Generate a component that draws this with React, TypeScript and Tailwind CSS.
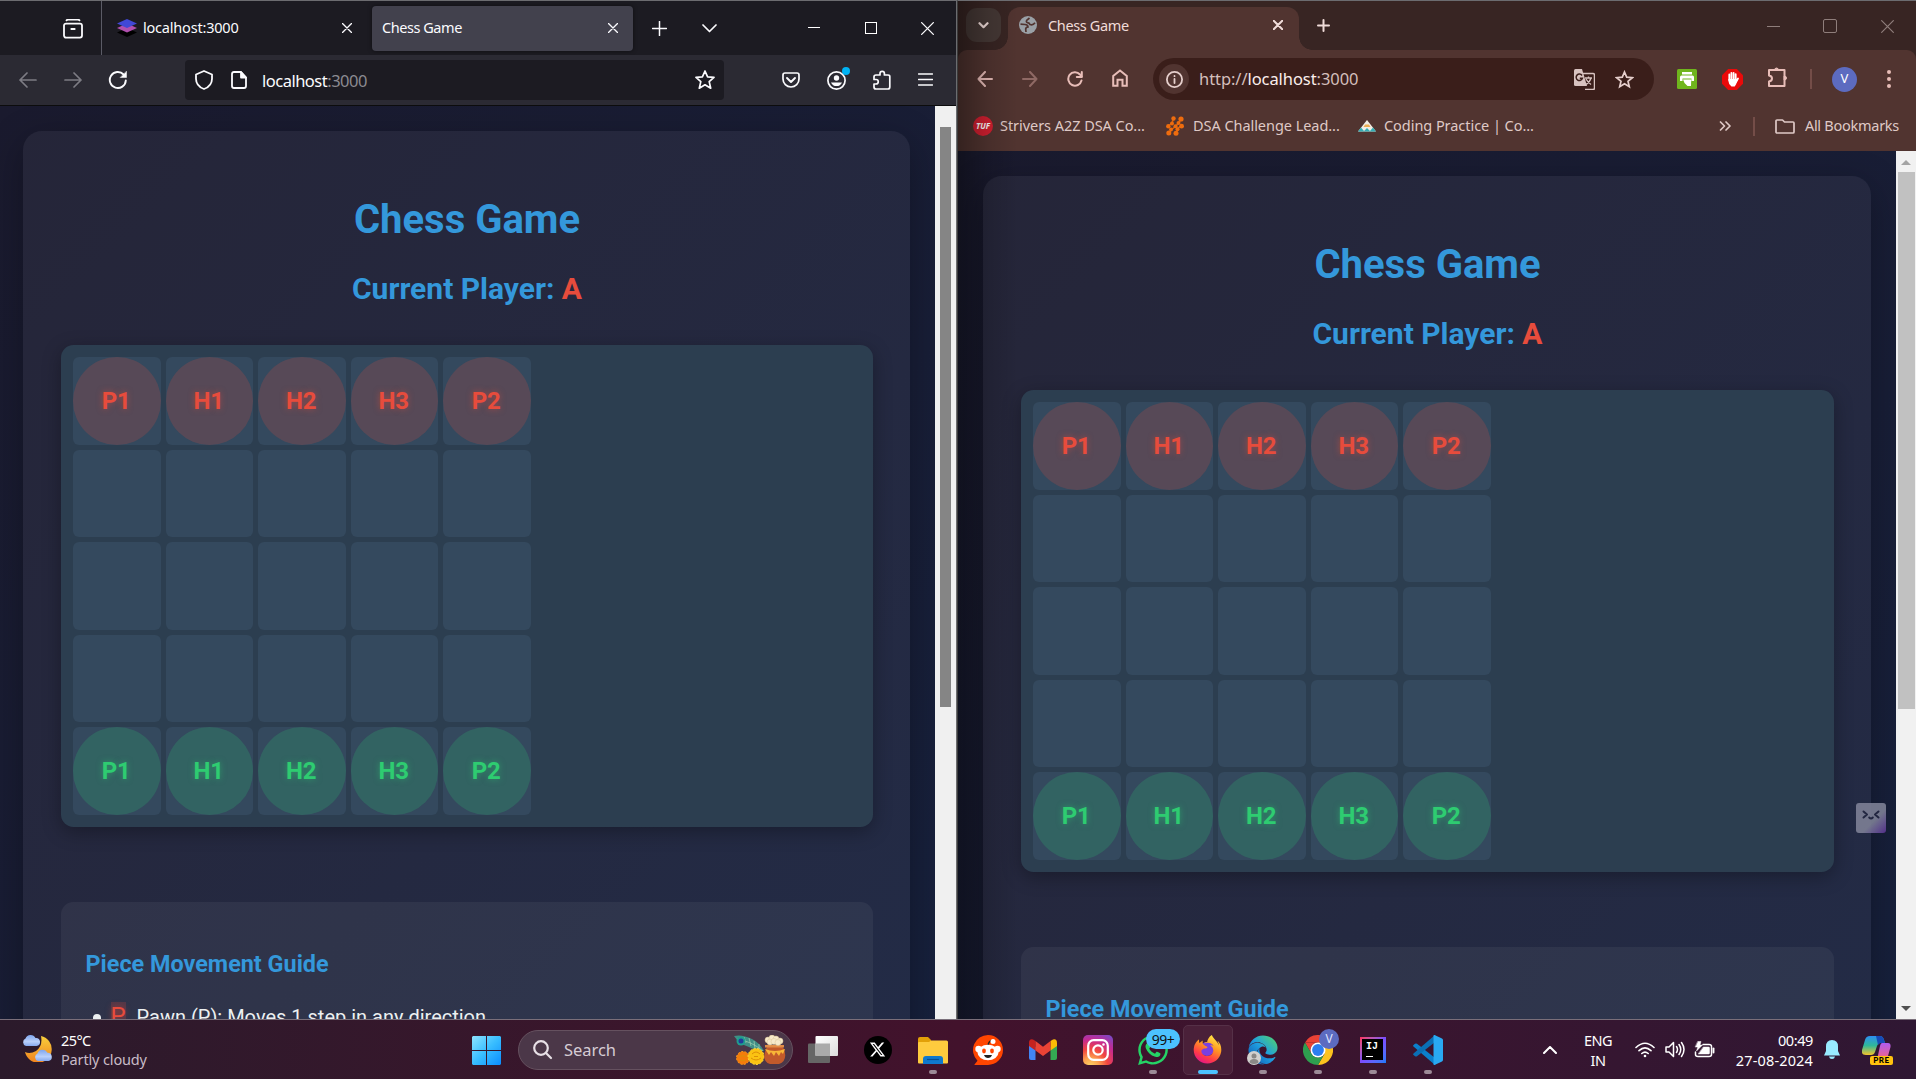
import React from "react";
import { FaWhatsapp, FaFirefoxBrowser, FaEdge } from "react-icons/fa";
import { FaXTwitter } from "react-icons/fa6";

type SvgProps = {
  w?: number;
  h?: number;
  box?: string;
  className?: string;
  sw?: number;
  children: React.ReactNode;
};

/** Stroked icon canvas; size defaults to 20 by 20. */
function Svg({ w = 20, h = 20, box, className = "", sw = 1.6, children }: SvgProps) {
  return (
    <svg
      width={w}
      height={h}
      viewBox={box ?? `0 0 ${w} ${h}`}
      className={`block shrink-0 ${className}`}
      fill="none"
      stroke="currentColor"
      strokeWidth={sw}
      strokeLinecap="round"
      strokeLinejoin="round"
    >
      {children}
    </svg>
  );
}

/* ------------------------------ Chess page ------------------------------ */

const names = ["P1", "H1", "H2", "H3", "P2"];

function Board() {
  return (
    <div className="mt-[39px] grid grid-cols-[repeat(5,87.5px)] grid-rows-[repeat(5,87.5px)] gap-[5px] rounded-[12.5px] bg-[#2c3e50] p-[12px] shadow-[0_5px_19px_rgba(0,0,0,0.3)]">
      {[0, 1, 2, 3, 4].map((row) =>
        names.map((name) => (
          <div key={row + name} className="overflow-hidden rounded-[6px] bg-[#34495e]">
            {row === 0 && (
              <div className="flex size-full items-center justify-center rounded-full bg-[#e74c3c]/20 text-[24px] font-bold text-[#e74c3c] [text-shadow:0_0_6px_rgba(231,76,60,0.5)]">
                <span className="-ml-px">{name}</span>
              </div>
            )}
            {row === 4 && (
              <div className="flex size-full items-center justify-center rounded-full bg-[#2ecc71]/20 text-[24px] font-bold text-[#2ecc71] [text-shadow:0_0_6px_rgba(46,204,113,0.5)]">
                <span className="-ml-px">{name}</span>
              </div>
            )}
          </div>
        )),
      )}
    </div>
  );
}

function ChessPage() {
  return (
    <div className="min-h-[1500px] bg-linear-135 from-[#1a1a2e] to-[#16213e] to-85% px-[25px] pt-[25px] font-[Roboto,sans-serif]">
      <div className="h-[1400px] rounded-[19px] bg-white/5 pt-[65px] pr-[37px] pl-[38px] shadow-[0_10px_37px_rgba(0,0,0,0.3)]">
        <h1 className="text-center text-[40px] leading-[47px] font-bold text-[#3498db]">Chess Game</h1>
        <h2 className="mt-[28px] text-center text-[30px] leading-[35px] font-bold text-[#3498db]">
          Current Player: <span className="text-[#e74c3c]">A</span>
        </h2>
        <Board />
        <div className="mt-[75px] h-[450px] rounded-[12.5px] bg-white/5 px-[24.5px] pt-[48px]">
          <h3 className="text-[23.4px] leading-[28px] font-bold text-[#3498db]">Piece Movement Guide</h3>
          <div className="mt-[24px] flex items-start text-[20px] leading-[30px] text-[#ecf0f1]">
            <span className="mt-[12px] ml-[7px] size-[8px] rounded-full bg-[#ecf0f1]" />
            <span className="ml-[10px] w-[15px] bg-[#e74c3c]/20 text-center text-[24px] leading-[28px] text-[#e74c3c] [text-shadow:0_0_6px_rgba(231,76,60,0.5)]">
              P
            </span>
            <span className="ml-[11px]">Pawn (P): Moves 1 step in any direction</span>
          </div>
        </div>
      </div>
    </div>
  );
}

/* ---------------------------- Firefox window ---------------------------- */

function Cross({ size = 10, className = "", sw = 1.4 }: { size?: number; className?: string; sw?: number }) {
  return (
    <Svg w={size} h={size} box="0 0 10 10" className={className} sw={sw}>
      <path d="M.5.5l9 9M9.5.5l-9 9" />
    </Svg>
  );
}

function FirefoxTabs() {
  return (
    <div className="flex h-[54px] items-center bg-[#1c1b22] text-[#fbfbfe]">
      <div className="flex h-full w-[102px] items-center justify-end border-r border-[#5b5b66] pr-[18px]">
        <Svg className="mt-px" sw={1.8}>
          <path d="M3.5 1.3q.6-.6 1.500-.6h10q.9 0 1.500.6" />
          <rect x="1" y="4.600" width="18" height="14" rx="2" />
          <path d="M8.300 10h3.400" />
        </Svg>
      </div>
      <div className="flex w-[270px] items-center pl-[15px]">
        <svg width="20" height="18" viewBox="0 0 20 18" className="shrink-0">
          <path d="M0 13.500 10 9l10 4.500L10 18z" fill="#000" />
          <path d="M0 9 10 4.500 20 9l-10 4.500z" fill="#b04fae" />
          <path d="M0 4.500 10 0l10 4.500L10 9z" fill="#4148d6" />
        </svg>
        <span className="ml-[6px] w-[199px] text-[14.5px] tracking-[-0.2px]">localhost:3000</span>
        <Cross />
      </div>
      <div className="flex h-[45px] w-[261px] items-center rounded-[4px] bg-[#42414d] pr-[15px] pl-[10px] shadow-[0_0_4px_rgba(0,0,0,0.5)]">
        <span className="flex-1 text-[14.5px] tracking-[-0.45px]">Chess Game</span>
        <Cross />
      </div>
      <Svg w={15} h={15} className="ml-[19px]" sw={1.5}>
        <path d="M7.500.5v14M.5 7.500h14" />
      </Svg>
      <Svg w={15} h={9} className="ml-[35px]" sw={1.7}>
        <path d="M1 1l6.500 6.500L14 1" />
      </Svg>
      <span className="mb-[2px] ml-[91px] h-px w-[12px] bg-white" />
      <span className="ml-[45px] size-[12px] border border-white" />
      <Cross size={13} className="ml-[44px]" sw={1} />
    </div>
  );
}

function FirefoxToolbar() {
  return (
    <div className="flex h-[51px] items-center border-b border-[#0c0c0d] bg-[#2b2a33] text-[#fbfbfe]">
      <Svg w={18} h={16} className="ml-[19px] text-[#7d7c84]" sw={1.7}>
        <path d="M17 8H1M8 1L1 8l7 7" />
      </Svg>
      <Svg w={18} h={16} className="ml-[27px] text-[#7d7c84]" sw={1.7}>
        <path d="M1 8h16M10 1l7 7-7 7" />
      </Svg>
      <Svg className="ml-[26px]" sw={1.900}>
        <path d="M17.800 10.500A8 8 0 1 1 15.600 4.500" />
        <path d="M18.500 1.500v6h-6z" fill="currentColor" strokeWidth={0.5} />
      </Svg>
      <div className="ml-[57px] flex h-[40px] w-[539px] items-center rounded-[4px] bg-[#1c1b22] pr-[9px] pl-[10px]">
        <Svg w={18} sw={1.8}>
          <path d="M9 1l8 3.500v4.200c0 4.800-3.200 8.500-8 10.300-4.800-1.800-8-5.500-8-10.300V4.500z" />
        </Svg>
        <Svg w={16} h={18} className="ml-[18px]" sw={1.8}>
          <path d="M10 1H3Q1 1 1 3v12q0 2 2 2h10q2 0 2-2V6.500z" />
          <path d="M10 1v5.500h5z" fill="currentColor" />
        </Svg>
        <span className="ml-[15px] flex-1 pt-[3px] text-[16.500px] tracking-[-0.5px]">
          localhost<span className="text-[#8b8a91]">:3000</span>
        </span>
        <Svg sw={1.7}>
          <path d="M10 1l2.600 5.800 6.400.6-4.800 4.200 1.500 6.600L10 14.800l-5.700 3.400 1.500-6.600L1 7.400l6.400-.6z" />
        </Svg>
      </div>
      <Svg w={18} h={16} className="ml-[58px]" sw={1.7}>
        <path d="M3 1h12q2 0 2 2v4a8 8 0 0 1-16 0V3q0-2 2-2z" />
        <path d="M5 6l4 4 4-4" strokeWidth={1.900} />
      </Svg>
      <div className="relative ml-[27px]">
        <Svg w={19} h={19} sw={1.7}>
          <circle cx="9.500" cy="9.500" r="8.600" />
          <circle cx="9.500" cy="7" r="2.700" fill="currentColor" stroke="none" />
          <path d="M4 11.500h11a6 6 0 0 1-11 0z" fill="currentColor" stroke="none" />
        </Svg>
        <span className="absolute -top-[4px] -right-[4px] size-[8px] rounded-full bg-[#00b3f4]" />
      </div>
      <Svg w={18} h={20} className="ml-[27px]" sw={1.7}>
        <path d="M7 5V3.500a2.200 2.200 0 0 1 4.400 0V5H15q1.800 0 1.800 1.500V17q0 2-2 2H3q-2 0-2-2v-3h2a2 2 0 0 0 0-4.500H1V7q0-2 2-2z" />
      </Svg>
      <Svg w={15} h={13} className="mb-px ml-[27px]" sw={1.4}>
        <path d="M.5 1h14M.5 6.500h14M.5 12h14" />
      </Svg>
    </div>
  );
}

function FirefoxWindow() {
  return (
    <div className="flex h-[1019px] w-[957px] flex-col border-t border-r border-[#6c6c70]">
      <FirefoxTabs />
      <FirefoxToolbar />
      <div className="flex min-h-0 flex-1">
        <div className="h-full w-[935px] overflow-hidden">
          <div className="-ml-[2px] w-[937px]">
            <ChessPage />
          </div>
        </div>
        <div className="flex-1 bg-[#f0f0f0] pt-[21px]">
          <div className="ml-[5px] h-[580px] w-[11px] bg-[#858585]" />
        </div>
      </div>
    </div>
  );
}

/* ----------------------------- Chrome window ---------------------------- */

function ChromeTabs() {
  return (
    <div className="flex h-[49px] items-start bg-[#382523] text-[#f0dcd9]">
      <div className="mt-[7px] ml-[8px] flex h-[34px] w-[35px] items-center justify-center rounded-[11px] bg-[#453835]">
        <Svg w={11} h={7} sw={2.200}>
          <path d="M1.500 1.200l4 4 4-4" />
        </Svg>
      </div>
      <div className="relative mt-[6px] ml-[7px] flex h-[43px] w-[291px] items-center rounded-t-[12px] bg-[#513430] pr-[16px] pb-[7px] pl-[11px]">
        <span className="absolute bottom-0 -left-[13px] size-[13px] bg-[radial-gradient(circle_at_0_0,transparent_12.5px,#513430_13px)]" />
        <span className="absolute -right-[13px] bottom-0 size-[13px] bg-[radial-gradient(circle_at_100%_0,transparent_12.5px,#513430_13px)]" />
        <svg width="18" height="18" viewBox="0 0 18 18" className="shrink-0">
          <circle cx="9" cy="9" r="9" fill="#9aa0a6" />
          <path
            d="M1.500 8.200 6 8.500q3 .2 3 2.500-2.500.3-2.300 2.500l.3 2.500M16 6.800q-2 2.700-5 1.700-.5-1.500-2.500-1.800-2-.7-.5-2.700l2.500-2"
            fill="none"
            stroke="#513430"
            strokeWidth="1.700"
          />
        </svg>
        <span className="ml-[11px] flex-1 pt-px text-[14.5px] tracking-[-0.35px]">Chess Game</span>
        <Cross size={10} sw={2} />
      </div>
      <Svg w={13} h={13} className="mt-[18px] ml-[18px]" sw={2}>
        <path d="M6.500 1v11M1 6.500h11" />
      </Svg>
      <div className="mt-[18px] ml-auto flex items-center pr-[22px] text-[#8f7e7b]">
        <span className="h-px w-[13px] bg-[#8f7e7b]" />
        <span className="ml-[43px] size-[14px] rounded-[2px] border border-[#8f7e7b]" />
        <Cross size={13} className="ml-[44px]" sw={0.900} />
      </div>
    </div>
  );
}

function ChromeToolbar() {
  return (
    <div className="flex h-[58px] items-center text-[#e8bdb8]">
      <Svg w={16} h={16} className="ml-[19px]" sw={2}>
        <path d="M15 8H1.500M8 1L1.500 8 8 15" />
      </Svg>
      <Svg w={16} h={16} className="ml-[29px] text-[#8f6964]" sw={2}>
        <path d="M1 8h13.500M8 1l6.500 7L8 15" />
      </Svg>
      <Svg w={16} h={16} className="ml-[29px]" sw={2}>
        <path d="M14.500 9.500A6.700 6.700 0 1 1 13 3.500L14.500 5.500" />
        <path d="M14.800 1v5h-5" />
      </Svg>
      <Svg w={16} h={18} className="mb-[2px] ml-[29px]" sw={2}>
        <path d="M1.200 16.800V7L8 1.500 14.800 7v9.800H10.500v-6h-5v6z" strokeLinejoin="miter" />
      </Svg>
      <div className="ml-[25px] flex h-[42px] w-[501px] items-center rounded-full bg-[#3a1e1a] pr-[20px] pl-[6px] text-[#e6cfcc]">
        <div className="flex size-[30px] items-center justify-center rounded-full bg-[#513430]">
          <Svg w={17} h={17} sw={1.8}>
            <circle cx="8.500" cy="8.500" r="7.600" />
            <path d="M8.500 8v4M8.500 5v.2" />
          </Svg>
        </div>
        <span className="ml-[10px] flex-1 pt-px text-[16.500px] tracking-[-0.07px] text-[#d4bfbc]">
          http://<span className="text-[#fbeeec]">localhost</span>:3000
        </span>
        <svg width="21" height="21" viewBox="0 0 21 21" className="shrink-0">
          <path d="M9 4.500h10q1.500 0 1.500 1.500v13q0 1.500-1.500 1.500H11" fill="none" stroke="#d8c3c0" strokeWidth="1.500" />
          <path d="M11 9h7M14.500 7.500V9M17 9q-1 4-5 6.500M12 10q2 3.500 5 5.500" fill="none" stroke="#d8c3c0" strokeWidth="1.300" />
          <path d="M1.500 0H8l5 17H1.500Q0 17 0 15.500v-14Q0 0 1.500 0z" fill="#d8c3c0" />
          <path d="M8 6.500A3.200 3.200 0 1 0 8.400 9.300H5.800" fill="none" stroke="#3a1e1a" strokeWidth="1.500" />
        </svg>
        <Svg w={19} h={19} className="ml-[20px]" sw={1.7}>
          <path
            d="M9.500 2l2.200 5.200 5.600.5-4.300 3.600 1.300 5.500-4.800-3-4.800 3L6 11.300 1.700 7.700l5.600-.5z"
            strokeLinejoin="miter"
          />
        </Svg>
      </div>
      <svg width="20" height="20" viewBox="0 0 20 20" className="ml-[23px] shrink-0">
        <rect width="20" height="20" rx="1.500" fill="#6fb51d" />
        <rect x="5" y="3" width="10" height="2.500" fill="#fff" />
        <path d="M3 12V8q0-1.500 1.500-1.500h11Q17 6.500 17 8v4h-2.500V9.500h-9V12z" fill="#fff" />
        <path d="M6 10.500h8.500q-.5 2-.5 6.500h-3.500l-3-3z" fill="#fff" />
      </svg>
      <svg width="21" height="21" viewBox="0 0 21 21" className="ml-[25px] shrink-0">
        <path d="M6.200 0h8.600L21 6.200v8.600L14.800 21H6.200L0 14.800V6.200z" fill="#ea0a0a" />
        <path
          d="M7.300 11V5.500M9.400 10V3.800M11.600 10V3.800M13.700 11V5.200M16 9.500l-2 3.500"
          stroke="#fff"
          strokeWidth="1.800"
          strokeLinecap="round"
        />
        <path d="M6.400 10h8.200l.8 1.500q-1 4-2.700 6H9.500Q6.500 15.500 6.400 12z" fill="#fff" />
      </svg>
      <Svg w={21} h={21} className="mb-[3px] ml-[24px]" sw={2}>
        <path d="M2 3h15.500v16H2v-4.500q3-.5 3-3t-3-3z" strokeLinejoin="round" />
        <path d="M7.500 3a2 2 0 0 1 4 0zM17.500 9a2 2 0 0 1 0 4z" fill="currentColor" strokeWidth={1} />
      </Svg>
      <span className="ml-[22px] h-[20px] w-[2px] bg-[#744d48]" />
      <span className="ml-[20px] flex size-[25px] items-center justify-center rounded-full bg-[#5c6bc0] text-[13px] text-white">
        V
      </span>
      <svg width="4" height="18" viewBox="0 0 4 18" className="ml-[30px] shrink-0" fill="#e8bdb8">
        <circle cx="2" cy="2" r="2" />
        <circle cx="2" cy="9" r="2" />
        <circle cx="2" cy="16" r="2" />
      </svg>
    </div>
  );
}

const bookmarkText = "text-[14.5px] tracking-[-0.05px] whitespace-nowrap";

function Bookmarks() {
  return (
    <div className="flex h-[43px] items-center pb-[7px] text-[#dfc9c6]">
      <div className="ml-[15px] flex size-[20px] shrink-0 items-center justify-center rounded-full bg-[#d31f30] text-[8px] font-bold text-white italic">
        TUF
      </div>
      <span className={`ml-[7px] w-[157px] ${bookmarkText}`}>Strivers A2Z DSA Co...</span>
      <svg width="18" height="20" viewBox="0 0 18 20" className="ml-[9px] shrink-0">
        <g stroke="#d95f0a" strokeWidth="1.500" fill="none">
          <path d="M7.500 2.500 6 7 2.500 10M15.500 2.500 13 6.500 10 10 5 14 3 18M15.500 10 11.500 12.500 10.500 17.500" />
        </g>
        <g fill="#ee6c0e">
          <circle cx="7.500" cy="2.500" r="2.200" />
          <circle cx="15" cy="3" r="2.600" />
          <circle cx="6" cy="7.500" r="2" />
          <circle cx="12.500" cy="7" r="2" />
          <circle cx="2.300" cy="10.200" r="2.200" />
          <circle cx="9.500" cy="10.300" r="2" />
          <circle cx="15.600" cy="10.200" r="2.400" />
          <circle cx="5" cy="13.500" r="2" />
          <circle cx="11.500" cy="13.300" r="2" />
          <circle cx="2.800" cy="17" r="2.500" />
          <circle cx="10" cy="17.300" r="2.500" />
        </g>
      </svg>
      <span className={`ml-[9px] w-[149px] ${bookmarkText}`}>DSA Challenge Lead...</span>
      <svg width="18" height="12" viewBox="0 0 18 12" className="ml-[16px] shrink-0">
        <path d="M9 0 18 11.500H0z" fill="#f2efe6" />
        <path d="M0 11.500 3 7.500l3 3.500 3-3 3 3 3-3.500 3 4z" fill="#35aeb5" />
        <path d="M7 4.500h4L12.500 7h-7z" fill="#edae55" />
      </svg>
      <span className={`ml-[8px] w-[160px] ${bookmarkText}`}>Coding Practice | Co...</span>
      <Svg w={12} h={10} className="ml-auto" sw={1.7}>
        <path d="M1.500 1l4 4-4 4M7 1l4 4-4 4" />
      </Svg>
      <span className="ml-[22px] h-[19px] w-[2px] bg-[#744d48]" />
      <Svg w={20} h={15} className="ml-[20px]" sw={1.700}>
        <path d="M1 1.800Q1 1 2 1h5.500l2 2H18q1 0 1 1v9q0 1-1 1H2q-1 0-1-1z" />
      </Svg>
      <span className="mr-[17px] ml-[10px] text-[14.5px] tracking-[-0.27px] whitespace-nowrap">All Bookmarks</span>
    </div>
  );
}

function ChromeWindow() {
  return (
    <div className="relative flex h-[1019px] w-[959px] flex-col border-t border-l border-[#6c6c70] border-l-[#3a3a3a]">
      <div className="bg-[#382523]">
        <ChromeTabs />
        <div className="rounded-t-[9px] bg-[#513430]">
          <ChromeToolbar />
          <Bookmarks />
        </div>
      </div>
      <div className="flex min-h-0 flex-1">
        <div className="h-full w-[938px] overflow-hidden">
          <ChessPage />
        </div>
        <div className="flex flex-1 flex-col items-center bg-[#f1f1f1]">
          <svg width="10" height="5" viewBox="0 0 10 5" className="mt-[9px]">
            <path d="M5 0l5 5H0z" fill="#a3a3a3" />
          </svg>
          <div className="mt-[7px] h-[537px] w-[17px] bg-[#c1c1c1]" />
          <svg width="10" height="5" viewBox="0 0 10 5" className="mt-auto mb-[8px]">
            <path d="M0 0h10L5 5z" fill="#505050" />
          </svg>
        </div>
      </div>
      <div className="pointer-events-none absolute inset-y-0 left-0 w-[60px] bg-linear-to-r from-black/35 via-black/12 to-transparent" />
      <div className="absolute top-[802px] left-[898px] flex size-[30px] justify-center rounded-[3px] bg-linear-135 from-[#7d8095] from-60% to-[#5a2f93] opacity-90">
        <Svg w={18} h={12} className="mt-[6px] text-[#232742]" sw={2}>
          <path d="M1.500 2.500 5 5.500l-3.500 3M16.500 2.500 13 5.500l3.500 3M7.200 8.500q1.800 1.800 3.600 0" />
        </Svg>
      </div>
    </div>
  );
}

/* -------------------------------- Taskbar ------------------------------- */

function TaskIcon({ children, running = false }: { children: React.ReactNode; running?: boolean }) {
  return (
    <div className="relative flex h-[59px] w-[55px] shrink-0 items-center justify-center">
      {children}
      {running && <span className="absolute bottom-[5px] h-[4px] w-[8px] rounded-full bg-[#9c8a97]" />}
    </div>
  );
}

function WeatherIcon() {
  return (
    <svg width="30" height="28" viewBox="0 0 30 28" className="mb-[3px] shrink-0">
      <defs>
        <linearGradient id="moon" x1="0" y1="0" x2="0" y2="1">
          <stop offset="0" stopColor="#f8cf3c" />
          <stop offset="1" stopColor="#f1821d" />
        </linearGradient>
        <linearGradient id="cloud" x1="0" y1="0" x2="0" y2="1">
          <stop offset="0" stopColor="#7fa6ee" />
          <stop offset=".6" stopColor="#b9d0fa" />
          <stop offset="1" stopColor="#86a9ee" />
        </linearGradient>
      </defs>
      <path d="M19 2a13.500 13.500 0 1 1-16 16q5 2.500 11-1 7-5 5-15z" fill="url(#moon)" />
      <path d="M4 12a4 4 0 0 1-.5-7.500A5.500 5.500 0 0 1 13.500 4a4 4 0 0 1 1 8z" fill="url(#cloud)" />
      <path d="M16 27a4 4 0 0 1-.5-7.500 5.500 5.500 0 0 1 10-.8 4.200 4.200 0 0 1 1 8.300z" fill="url(#cloud)" />
    </svg>
  );
}

function WindowsLogo() {
  return (
    <svg width="29" height="29" viewBox="0 0 29 29" className="mt-px shrink-0">
      <defs>
        <linearGradient id="win" x1="0" y1="0" x2="1" y2="1">
          <stop offset="0" stopColor="#8ee4ff" />
          <stop offset=".5" stopColor="#38bdff" />
          <stop offset="1" stopColor="#0a8cff" />
        </linearGradient>
      </defs>
      <path d="M1 0h13v14H0V1zM15 0h13l1 1v13H15zM0 15h14v14H1l-1-1zM15 15h14v13l-1 1H15z" fill="url(#win)" />
    </svg>
  );
}

function SearchBox() {
  const beads = [
    [34, 5], [38, 3], [42, 4], [46, 6], [36, 7], [40, 6.500], [44, 7.500],
  ];
  return (
    <div className="mt-px ml-[17px] flex h-[40px] w-[275px] shrink-0 items-center rounded-full border border-[#65515f] bg-[#4b3748] pl-[14px]">
      <Svg className="text-[#e8e0e6]" sw={2.200}>
        <circle cx="8" cy="8" r="6.800" />
        <path d="M13 13l5 5" />
      </Svg>
      <span className="ml-[11px] flex-1 pt-px text-[16.500px] tracking-[-0.05px] text-[#d6ccd4]">Search</span>
      <svg width="52" height="30" viewBox="0 0 52 30" className="mr-[6px] shrink-0">
        <path d="M0 1Q8-1 18 4q8 4 12 12-9-1-15-4Q5 9 0 1z" fill="#3f8f86" />
        <path d="M3 4q14 2 26 12M10 2l2 6M15 3l2 8M20 6l1 8M25 9v6" stroke="#a5d3b4" strokeWidth=".7" fill="none" />
        <circle cx="7" cy="6" r="4.500" fill="#1f9e8e" />
        <circle cx="7" cy="6" r="2.500" fill="#223a9b" />
        <circle cx="9" cy="23" r="6.500" fill="#f47c0b" strokeDasharray="2 1.500" stroke="#ff9a1c" />
        <circle cx="22" cy="21.500" r="8" fill="#fbc312" strokeDasharray="2 1.500" stroke="#ffdb3d" />
        <path d="M18 19q4-4 8 0M17 23q5 4 10 0M20 21.500h4M5 22q4-3 8 0M6 25q3 2 6 0" stroke="#dd8f08" fill="none" />
        <path d="M32 14q-5 12 4 15h9q9-3 5-15l-3-4H34z" fill="#c25a2b" />
        <path d="M31 14q10 4 20 0l-2 5-2-2-2 4-3-4-2 4-3-4-2 3z" fill="#f8b637" />
        <path d="M31 10h19v2.500H31z" fill="#e28d47" />
        {beads.map(([x, y]) => (
          <circle key={`${x}-${y}`} cx={x} cy={y} r="3" fill="#f6eacb" stroke="#d9c796" strokeWidth=".5" />
        ))}
      </svg>
    </div>
  );
}

function TaskView() {
  return (
    <svg width="30" height="27" viewBox="0 0 30 27">
      <defs>
        <linearGradient id="tv" x1="0" y1="0" x2="1" y2="1">
          <stop offset="0" stopColor="#fff" />
          <stop offset="1" stopColor="#dcdcdc" />
        </linearGradient>
      </defs>
      <rect x="0" y="7.500" width="22" height="19.500" rx="1" fill="#666" />
      <rect x="7.500" y="0" width="22.500" height="20" rx="1" fill="url(#tv)" />
      <rect x="7.500" y="7.500" width="14.500" height="12.500" fill="#aaa" />
    </svg>
  );
}

function FolderIcon() {
  return (
    <svg width="30" height="27" viewBox="0 0 30 27" className="mt-px">
      <path d="M0 2q0-2 2-2h8l3 3v5H0z" fill="#e2a008" />
      <path d="M0 6q0-1 1-1h10l2-1.500h15.500q1.500 0 1.500 1.500v20.500q0 1-1 1H1q-1 0-1-1z" fill="#fecb3e" />
      <path d="M5 27v-5q0-3 3-3h14q3 0 3 3v5z" fill="#0f78cc" />
      <path d="M9 22.500h12" stroke="#064f94" strokeWidth="1.200" />
    </svg>
  );
}

function RedditIcon() {
  return (
    <svg width="30" height="30" viewBox="0 0 30 30">
      <path d="M15 0a15 15 0 1 1 0 30H2q-1 0-.3-.8L4.500 25.700A15 15 0 0 1 15 0z" fill="#ff4500" />
      <path d="M15 11q.5-5 3.500-5" stroke="#222" strokeWidth="1.500" fill="none" />
      <circle cx="20" cy="6.500" r="2.500" fill="#fff" />
      <circle cx="5.500" cy="14" r="3.200" fill="#fff" />
      <circle cx="24.500" cy="14" r="3.200" fill="#fff" />
      <ellipse cx="15" cy="17.500" rx="10.500" ry="7.700" fill="#fff" />
      <ellipse cx="11" cy="16" rx="1.900" ry="2.400" fill="#ff4500" />
      <ellipse cx="19" cy="16" rx="1.900" ry="2.400" fill="#ff4500" />
      <path d="M11 20h8q-1 3-4 3t-4-3z" fill="#222" />
    </svg>
  );
}

function GmailIcon() {
  return (
    <svg width="28" height="21" viewBox="0 0 28 21">
      <path d="M0 4v15q0 2 2 2h4.500V8z" fill="#4285f4" />
      <path d="M28 4v15q0 2-2 2h-4.500V8z" fill="#34a853" />
      <path d="M21.500 2 24 .5q4-1 4 3.500v3l-6.500 4.500z" fill="#fbbc04" />
      <path d="M6.500 2 4 .5Q0-.5 0 4v3l6.500 4.500z" fill="#c5221f" />
      <path d="M6.500 2 14 7.800 21.500 2v9.500L14 17l-7.500-5.500z" fill="#ea4335" />
    </svg>
  );
}

function InstagramIcon() {
  return (
    <div className="flex size-[30px] items-center justify-center rounded-[5px] bg-[radial-gradient(circle_at_25%_105%,#fdd868_0%,#fca24f_22%,#f2453f_45%,#c52a92_70%,#6a4fd0_100%)]">
      <Svg w={22} h={22} className="text-white" sw={2.200}>
        <rect x="1.200" y="1.200" width="19.600" height="19.600" rx="5.500" />
        <circle cx="11" cy="11" r="4.700" />
        <circle cx="16.500" cy="5.500" r=".6" strokeWidth={1.400} />
      </Svg>
    </div>
  );
}

function ChromeIcon() {
  return (
    <svg width="30" height="30" viewBox="0 0 30 30">
      <path d="M15 7.500h13A15 15 0 0 1 15 30l6.500-11.200z" fill="#fcc31e" />
      <path d="M15 7.500 2 7.500A15 15 0 0 1 28 7.500z" fill="#e94235" />
      <path d="M2 7.500 8.500 18.700A7.500 7.500 0 0 1 15 7.500z" fill="#e94235" />
      <path d="M2 7.500A15 15 0 0 0 15 30l6.500-11.200a7.500 7.500 0 0 1-13 0z" fill="#2e9e4f" />
      <circle cx="15" cy="15" r="7.500" fill="#fff" />
      <circle cx="15" cy="15" r="5.900" fill="#2b7ef0" />
    </svg>
  );
}

function VsCodeIcon() {
  return (
    <svg width="30" height="30" viewBox="0 0 30 30">
      <path d="M0 10.500 2 8.700q1-.6 2 0L24 24.500 22 30 .5 11.500z" fill="#0b7fcb" />
      <path d="M0 19.500l2 1.800q1 .6 2 0L24 5.500 22 0 .5 18.500z" fill="#0a6fb5" />
      <path d="M21.500 0 29 3.500q1 .6 1 1.500v20q0 .9-1 1.500L21.500 30q-1 .2-1-1V1q0-1.200 1-1z" fill="#29a9f2" />
    </svg>
  );
}

function Taskbar() {
  return (
    <div className="flex h-[60px] items-center border-t border-[#7a6f7a] bg-linear-to-r from-[#2b1a2b] via-[#42122c] to-[#2f1733] text-white">
      <div className="flex w-[472px] shrink-0 items-center pl-[22px]">
        <WeatherIcon />
        <div className="ml-[9px] text-[14.500px] leading-[20px]">
          <div className="tracking-[-0.6px]">25°C</div>
          <div className="-mt-px tracking-[-0.15px] text-[#c9bcc7]">Partly cloudy</div>
        </div>
      </div>
      <WindowsLogo />
      <SearchBox />
      <div className="ml-[2px] flex">
        <TaskIcon>
          <TaskView />
        </TaskIcon>
        <TaskIcon>
          <span className="flex size-[28px] items-center justify-center rounded-full bg-black">
            <FaXTwitter size={17} />
          </span>
        </TaskIcon>
        <TaskIcon running>
          <FolderIcon />
        </TaskIcon>
        <TaskIcon>
          <RedditIcon />
        </TaskIcon>
        <TaskIcon>
          <GmailIcon />
        </TaskIcon>
        <TaskIcon>
          <InstagramIcon />
        </TaskIcon>
        <TaskIcon running>
          <FaWhatsapp size={34} color="#25d366" />
          <span className="absolute top-[9px] left-[21px] flex h-[20px] w-[34px] items-center justify-center rounded-full bg-[#4cc2ff] text-[14px] tracking-[-0.5px] text-[#111]">
            99+
          </span>
        </TaskIcon>
        <TaskIcon>
          <div className="flex h-[50px] w-[50px] items-center justify-center rounded-[5px] border border-[#553047] bg-[#4a2039]">
            <svg width="0" height="0" className="absolute">
              <linearGradient id="fox" x1=".8" y1="0" x2=".3" y2="1">
                <stop offset="0" stopColor="#fff04a" />
                <stop offset=".4" stopColor="#ff9a22" />
                <stop offset=".75" stopColor="#ff3b47" />
                <stop offset="1" stopColor="#e31587" />
              </linearGradient>
              <linearGradient id="edge" x1="0" y1="1" x2="1" y2="0">
                <stop offset="0" stopColor="#0f4fa8" />
                <stop offset=".5" stopColor="#1e9de0" />
                <stop offset="1" stopColor="#56d865" />
              </linearGradient>
            </svg>
            <div className="relative flex size-[29px] items-center justify-center">
              <span className="absolute top-[7px] left-[7px] size-[14px] rounded-full bg-[#7a3fe0]" />
              <FaFirefoxBrowser size={29} fill="url(#fox)" className="relative" />
            </div>
          </div>
          <span className="absolute bottom-[5px] h-[4px] w-[20px] rounded-full bg-[#4cc2ff]" />
        </TaskIcon>
        <TaskIcon running>
          <FaEdge size={30} fill="url(#edge)" />
          <svg width="14" height="14" viewBox="0 0 14 14" className="absolute top-[31px] left-[12px]">
            <circle cx="7" cy="7" r="7" fill="#d2d0ce" />
            <circle cx="7" cy="5" r="2.500" fill="#8a8886" />
            <path d="M2.500 11.500q0-3.500 4.500-3.500t4.500 3.500q-4.500 3-9 0z" fill="#8a8886" />
          </svg>
        </TaskIcon>
        <TaskIcon running>
          <ChromeIcon />
          <span className="absolute top-[9px] left-[29px] flex size-[20px] items-center justify-center rounded-full bg-[#5c6bc0] text-[12px] text-[#dfe3ff]">
            V
          </span>
        </TaskIcon>
        <TaskIcon running>
          <div className="flex size-[26px] items-center justify-center bg-linear-135 from-[#fe2857] via-[#7a4cff] to-[#087cfa]">
            <div className="flex size-[21px] flex-col bg-black pt-[3px] pl-[4px] font-['Liberation_Mono',monospace] text-[10px] leading-[9px] font-bold">
              IJ
              <span className="mt-[5px] h-px w-[7px] bg-white" />
            </div>
          </div>
        </TaskIcon>
        <TaskIcon running>
          <VsCodeIcon />
        </TaskIcon>
      </div>
      <div className="ml-auto flex items-center">
        <Svg w={14} h={8} sw={2}>
          <path d="M1 7l6-6 6 6" />
        </Svg>
        <div className="ml-[26px] w-[30px] text-center text-[14.500px] leading-[20px] tracking-[-0.5px]">
          ENG
          <br />
          IN
        </div>
        <Svg w={20} h={16} className="ml-[22px]" sw={1.600}>
          <path d="M1 5.500q9-8.500 18 0M4 8.700q6-5.600 12 0M6.800 11.500q3.200-2.900 6.400 0" />
          <circle cx="10" cy="14" r="1.300" fill="currentColor" stroke="none" />
        </Svg>
        <Svg w={20} h={17} className="ml-[10px]" sw={1.500}>
          <path d="M1 6v5h3l4.500 4.500v-14L4 6zM11.500 5.500q2 3 0 6M14 3.500q3.500 5 0 10M16.500 1.500q5 7 0 14" />
        </Svg>
        <Svg w={21} h={17} className="ml-[9px]" sw={1.500}>
          <path d="M9 3.500h6q2.500 0 2.500 2v8q0 2-2.500 2H4q-2.500 0-2.500-2v-2.500" />
          <path d="M9.500 6h5.200q.8 0 .8.800v5.400q0 .8-.8.800H4.500z" fill="currentColor" strokeWidth={0.500} />
          <path d="M19.500 7.500v4" strokeWidth={1.900} />
          <path d="M4 .5h3L6 4h2.500L2.500 10 3.800 6H1.500z" fill="currentColor" strokeWidth={0.500} />
        </Svg>
        <div className="ml-[10px] w-[88px] text-right text-[14.500px] leading-[20px] whitespace-nowrap">
          <div className="tracking-[-0.4px]">00:49</div>
          <div className="tracking-[0.15px]">27-08-2024</div>
        </div>
        <svg width="16" height="19" viewBox="0 0 16 19" className="ml-[11px]">
          <path d="M8 0q6 0 6 6.500V11l2 4.500H0L2 11V6.500Q2 0 8 0z" fill="#99ebff" />
          <path d="M5 16.500h6q-.5 2.500-3 2.500t-3-2.500z" fill="#99ebff" />
        </svg>
        <div className="relative mr-[24px] ml-[22px]">
          <svg width="30" height="28" viewBox="0 0 30 28">
            <defs>
              <linearGradient id="cpl" x1="0" y1="0" x2="0" y2="1">
                <stop offset="0" stopColor="#2d8ff2" />
                <stop offset=".5" stopColor="#2fb79a" />
                <stop offset="1" stopColor="#f3c52c" />
              </linearGradient>
              <linearGradient id="cpr" x1="0" y1="0" x2="0" y2="1">
                <stop offset="0" stopColor="#b05cf0" />
                <stop offset="1" stopColor="#f5647c" />
              </linearGradient>
            </defs>
            <path d="M8 0h10q3 0 4 4l1 3h-5q-2 0-3 3l-2 6q-1 3-4 3H4q-5 0-4-5L3 4q1-4 5-4z" fill="url(#cpl)" />
            <path d="M14 0h4q3 0 4 4l1 3h-5l-2 2z" fill="#164bb8" />
            <path d="M20 7h6q3 0 2.500 4L26 20q-1 4-5 4h-6l3-14q.5-3 2-3z" fill="url(#cpr)" />
          </svg>
          <span className="absolute -right-px -bottom-[1px] flex h-[9px] w-[23px] items-center justify-center rounded-[2px] bg-[#ffc20e] font-[Lato,sans-serif] text-[8px] font-black tracking-[0.6px] text-black">
            PRE
          </span>
        </div>
      </div>
    </div>
  );
}

export default function App() {
  return (
    <div className="h-[1079px] w-[1916px] overflow-hidden bg-black font-['Noto_Sans','Open_Sans',sans-serif]">
      <div className="flex">
        <FirefoxWindow />
        <ChromeWindow />
      </div>
      <Taskbar />
    </div>
  );
}
